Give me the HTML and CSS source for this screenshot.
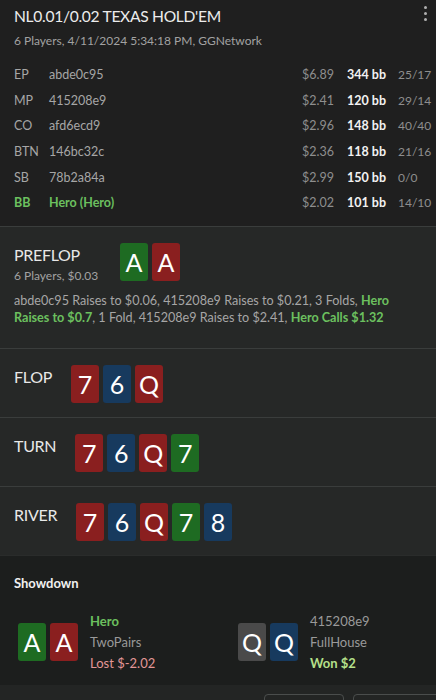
FILE: index.html
```html
<!DOCTYPE html>
<html lang="en">
<head>
  <meta charset="UTF-8">
  <meta name="viewport" content="width=device-width, initial-scale=1.0">
  <title>Hand History</title>
  <link rel="stylesheet" href="styles.css">
</head>
<body>
  <div class="hand">
    <header class="summary">
      <div class="title-row">
        <h1 class="title">NL0.01/0.02 TEXAS HOLD'EM</h1>
        <button class="menu" aria-label="More">
          <span></span><span></span><span></span>
        </button>
      </div>
      <p class="subtitle">6 Players, 4/11/2024 5:34:18 PM, GGNetwork</p>

      <div class="players">
        <div class="player">
          <span class="pos">EP</span><span class="name">abde0c95</span>
          <span class="money">$6.89</span><span class="bb">344 bb</span><span class="ratio">25/17</span>
        </div>
        <div class="player">
          <span class="pos">MP</span><span class="name">415208e9</span>
          <span class="money">$2.41</span><span class="bb">120 bb</span><span class="ratio">29/14</span>
        </div>
        <div class="player">
          <span class="pos">CO</span><span class="name">afd6ecd9</span>
          <span class="money">$2.96</span><span class="bb">148 bb</span><span class="ratio">40/40</span>
        </div>
        <div class="player">
          <span class="pos">BTN</span><span class="name">146bc32c</span>
          <span class="money">$2.36</span><span class="bb">118 bb</span><span class="ratio">21/16</span>
        </div>
        <div class="player">
          <span class="pos">SB</span><span class="name">78b2a84a</span>
          <span class="money">$2.99</span><span class="bb">150 bb</span><span class="ratio">0/0</span>
        </div>
        <div class="player hero">
          <span class="pos">BB</span><span class="name">Hero (Hero)</span>
          <span class="money">$2.02</span><span class="bb">101 bb</span><span class="ratio">14/10</span>
        </div>
      </div>
    </header>

    <section class="street preflop">
      <div class="street-head">
        <div class="street-title">
          <h2>PREFLOP</h2>
          <p class="street-info">6 Players, $0.03</p>
        </div>
        <div class="cards">
          <span class="card green">A</span>
          <span class="card red">A</span>
        </div>
      </div>
      <p class="actions">
        abde0c95 Raises to $0.06, 415208e9 Raises to $0.21, 3 Folds, <b>Hero Raises to $0.7</b>, 1 Fold, 415208e9 Raises to $2.41, <b>Hero Calls $1.32</b>
      </p>
    </section>

    <section class="street">
      <div class="street-head">
        <h2>FLOP</h2>
        <div class="cards">
          <span class="card red">7</span>
          <span class="card blue">6</span>
          <span class="card red">Q</span>
        </div>
      </div>
    </section>

    <section class="street">
      <div class="street-head">
        <h2>TURN</h2>
        <div class="cards">
          <span class="card red">7</span>
          <span class="card blue">6</span>
          <span class="card red">Q</span>
          <span class="card green">7</span>
        </div>
      </div>
    </section>

    <section class="street">
      <div class="street-head">
        <h2>RIVER</h2>
        <div class="cards">
          <span class="card red">7</span>
          <span class="card blue">6</span>
          <span class="card red">Q</span>
          <span class="card green">7</span>
          <span class="card blue">8</span>
        </div>
      </div>
    </section>

    <section class="showdown">
      <h3>Showdown</h3>
      <div class="results">
        <div class="result">
          <div class="cards">
            <span class="card green">A</span>
            <span class="card red">A</span>
          </div>
          <div class="result-info">
            <span class="who hero-name">Hero</span>
            <span class="combo">TwoPairs</span>
            <span class="lost">Lost $-2.02</span>
          </div>
        </div>
        <div class="result">
          <div class="cards">
            <span class="card gray">Q</span>
            <span class="card blue">Q</span>
          </div>
          <div class="result-info">
            <span class="who">415208e9</span>
            <span class="combo">FullHouse</span>
            <span class="won">Won $2</span>
          </div>
        </div>
      </div>
    </section>

    <footer class="footer">
      <button class="outline" aria-label="Previous hand"></button>
      <button class="outline wide" aria-label="Next hand"></button>
    </footer>
  </div>
</body>
</html>
```

FILE: styles.css
```css
* {
  box-sizing: border-box;
  margin: 0;
  padding: 0;
}

body {
  font-family: 'Lato', 'Open Sans', sans-serif;
  background-color: #1f1f1f;
  color: #e4e4e4;
  width: 436px;
  height: 700px;
  overflow: hidden;
}

.hand {
  display: flex;
  flex-direction: column;
}

/* header */

.summary {
  padding: 5px 0 10px 14px;
  background-color: #1f1f1f;
}

.title-row {
  display: flex;
  justify-content: space-between;
  align-items: flex-start;
}

.title {
  font-size: 15.6px;
  font-weight: 400;
  letter-spacing: -0.3px;
  line-height: 22px;
  color: #ececec;
}

.menu {
  display: flex;
  flex-direction: column;
  gap: 3px;
  width: 20px;
  margin: 0 1px 0 0;
  padding-top: 1px;
  align-items: center;
  background: none;
  border: none;
}

.menu span {
  width: 3px;
  height: 3px;
  border-radius: 50%;
  background-color: #b0b0b0;
}

.subtitle {
  margin-top: 5px;
  font-size: 12px;
  line-height: 18px;
  color: #a2a2a2;
}

.players {
  margin-top: 12px;
}

.player {
  display: grid;
  grid-template-columns: 35px 1fr auto 51px 38px;
  align-items: center;
  height: 25.6px;
  font-size: 12.5px;
  color: #a6a6a6;
}

.player .money {
  padding-right: 13px;
  text-align: right;
  color: #8e8e8e;
}

.player .bb {
  font-weight: 700;
  color: #f2f2f2;
}

.player .ratio {
  font-size: 12px;
  color: #8e8e8e;
}

.player.hero .pos,
.player.hero .name {
  font-weight: 700;
  color: #6cc05f;
}

/* streets */

.street {
  background-color: #262827;
  border-top: 1px solid #3a3d3c;
  padding: 16px 14px 14px;
}

.preflop {
  padding-bottom: 22px;
}

.street-head {
  display: flex;
  align-items: flex-start;
  gap: 19px;
}

.street h2 {
  font-size: 16px;
  font-weight: 400;
  letter-spacing: -0.3px;
  line-height: 24px;
  color: #e8e8e8;
}

.street-title {
  min-width: 87px;
}

.street-info {
  font-size: 12px;
  line-height: 17px;
  color: #a2a2a2;
}

.cards {
  display: flex;
  gap: 4px;
}

.card {
  display: flex;
  justify-content: center;
  align-items: center;
  width: 28px;
  height: 38px;
  border-radius: 3px;
  font-size: 25px;
  color: #ffffff;
}

.card.red {
  background-color: #8a1f1f;
}

.card.blue {
  background-color: #173a5e;
}

.card.green {
  background-color: #1e6b22;
}

.card.gray {
  background-color: #4a4a4a;
}

.actions {
  margin-top: 8px;
  padding-right: 30px;
  font-size: 12.6px;
  line-height: 17px;
  color: #a6a6a6;
}

.actions b {
  color: #6cc05f;
}

/* showdown */

.showdown {
  background-color: #1c1e1d;
  border-top: 1px solid #2a2c2b;
  padding: 18px 14px 0;
  height: 130px;
}

.showdown h3 {
  font-size: 13px;
  font-weight: 700;
  line-height: 18px;
  color: #f0f0f0;
}

.results {
  display: grid;
  grid-template-columns: 220px 1fr;
  margin-top: 19px;
  padding-left: 4px;
}

.result {
  display: flex;
  align-items: center;
  gap: 12px;
}

.result-info {
  display: flex;
  flex-direction: column;
  font-size: 13px;
  line-height: 21px;
  color: #9a9a9a;
}

.hero-name {
  font-weight: 700;
  color: #6cc05f;
}

.lost {
  color: #e39696;
}

.won {
  font-weight: 700;
  color: #b5e08a;
}

/* footer */

.footer {
  display: flex;
  justify-content: flex-end;
  gap: 9px;
  height: 15px;
  padding-top: 9px;
  background-color: #232524;
  overflow: hidden;
}

.outline {
  width: 80px;
  height: 30px;
  border: 1px solid #4a4d4c;
  border-radius: 4px;
  background: none;
}

.outline.wide {
  width: 90px;
  margin-right: -7px;
}
```
